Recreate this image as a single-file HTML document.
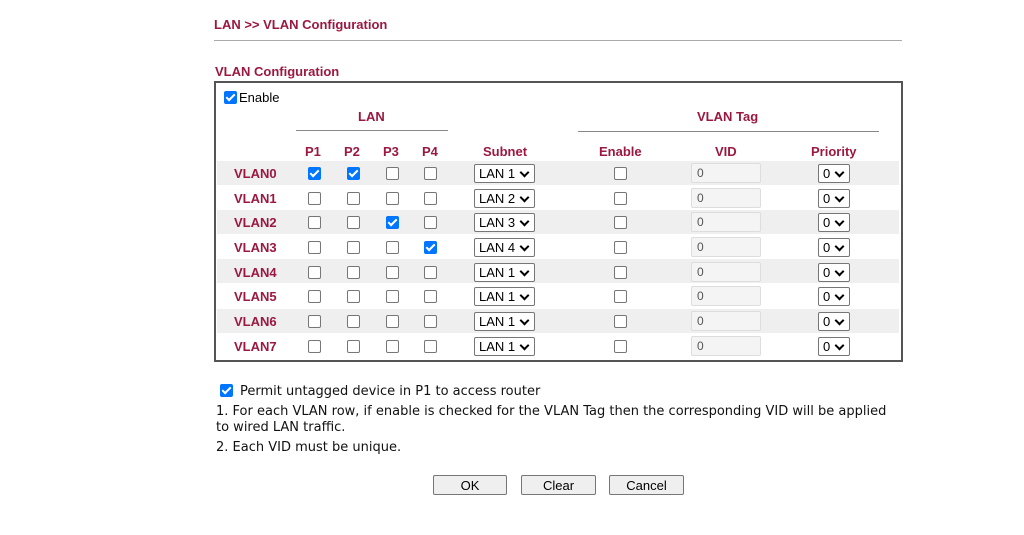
<!DOCTYPE html><html><head><meta charset="utf-8"><style>
body{margin:0;width:1024px;height:535px;background:#fff;position:relative;overflow:hidden;font-family:"Liberation Sans",Arial,sans-serif}
.a{position:absolute}
.t{color:#9b1840;font-weight:bold;font-size:13px}
.cb{position:absolute;width:11px;height:11px;border:1px solid #767676;border-radius:2px;background:#fff}
.cb.c{background:#0075ff;border-color:#0075ff}
.cb.c:after{content:"";position:absolute;left:3px;top:0px;width:3px;height:7px;border:solid #fff;border-width:0 2px 2px 0;transform:rotate(45deg)}
.sel{position:absolute;border:1px solid #767676;border-radius:2px;background:#fff;font-size:13px;line-height:17px;padding-left:4px;box-sizing:border-box;height:19px;color:#000}
.sel:after{content:"";position:absolute;right:6px;top:4px;width:5px;height:5px;border:solid #000;border-width:0 2px 2px 0;transform:rotate(45deg)}
.vid{position:absolute;width:70px;height:20px;border:1px solid #ddd;background:#f4f4f4;box-sizing:border-box;font-size:12px;color:#555;padding-left:5px;line-height:18px;border-radius:2px}
.row{position:absolute;left:217px;width:682px;height:24px}
.vl{position:absolute;left:234px;font-size:13px;font-weight:bold;color:#9b1840}
.btn{position:absolute;top:475px;height:20px;border:1px solid #767676;background:#efefef;border-radius:2px;font-size:13px;text-align:center;line-height:19px;box-sizing:border-box}
.n{font-family:"DejaVu Sans",Verdana,sans-serif;font-size:13px;color:#111}
</style></head><body>
<div class="a t" style="left:214px;top:17px">LAN &gt;&gt; VLAN Configuration</div>
<div class="a" style="left:214px;top:40px;width:688px;height:1px;background:#aaa"></div>
<div class="a t" style="left:215px;top:64px">VLAN Configuration</div>
<div class="a" style="left:214px;top:81px;width:685px;height:277px;border:2px solid #555"></div>
<div class="cb c" style="left:224px;top:91px"></div>
<div class="a" style="left:239px;top:90px;font-size:13px">Enable</div>
<div class="a t" style="left:358px;top:109px">LAN</div>
<div class="a" style="left:296px;top:130px;width:152px;height:1px;background:#888"></div>
<div class="a t" style="left:697px;top:109px">VLAN Tag</div>
<div class="a" style="left:578px;top:131px;width:301px;height:1px;background:#888"></div>
<div class="a t" style="left:305px;top:144px">P1</div>
<div class="a t" style="left:344px;top:144px">P2</div>
<div class="a t" style="left:383px;top:144px">P3</div>
<div class="a t" style="left:422px;top:144px">P4</div>
<div class="a t" style="left:483px;top:144px">Subnet</div>
<div class="a t" style="left:599px;top:144px">Enable</div>
<div class="a t" style="left:715px;top:144px">VID</div>
<div class="a t" style="left:811px;top:144px">Priority</div>

<div class="row" style="top:161px;background:#efefef"></div>
<div class="row" style="top:210px;background:#efefef"></div>
<div class="row" style="top:259px;background:#efefef"></div>
<div class="row" style="top:309px;background:#efefef"></div>

<div class="vl" style="top:166px">VLAN0</div><div class="cb c" style="left:308px;top:167px"></div><div class="cb c" style="left:347px;top:167px"></div><div class="cb" style="left:386px;top:167px"></div><div class="cb" style="left:424px;top:167px"></div><div class="sel" style="left:474px;top:164px;width:61px">LAN 1</div><div class="cb" style="left:614px;top:167px"></div><div class="vid" style="left:691px;top:163px">0</div><div class="sel" style="left:818px;top:164px;width:32px">0</div>
<div class="vl" style="top:191px">VLAN1</div><div class="cb" style="left:308px;top:192px"></div><div class="cb" style="left:347px;top:192px"></div><div class="cb" style="left:386px;top:192px"></div><div class="cb" style="left:424px;top:192px"></div><div class="sel" style="left:474px;top:189px;width:61px">LAN 2</div><div class="cb" style="left:614px;top:192px"></div><div class="vid" style="left:691px;top:188px">0</div><div class="sel" style="left:818px;top:189px;width:32px">0</div>
<div class="vl" style="top:215px">VLAN2</div><div class="cb" style="left:308px;top:216px"></div><div class="cb" style="left:347px;top:216px"></div><div class="cb c" style="left:386px;top:216px"></div><div class="cb" style="left:424px;top:216px"></div><div class="sel" style="left:474px;top:213px;width:61px">LAN 3</div><div class="cb" style="left:614px;top:216px"></div><div class="vid" style="left:691px;top:212px">0</div><div class="sel" style="left:818px;top:213px;width:32px">0</div>
<div class="vl" style="top:240px">VLAN3</div><div class="cb" style="left:308px;top:241px"></div><div class="cb" style="left:347px;top:241px"></div><div class="cb" style="left:386px;top:241px"></div><div class="cb c" style="left:424px;top:241px"></div><div class="sel" style="left:474px;top:238px;width:61px">LAN 4</div><div class="cb" style="left:614px;top:241px"></div><div class="vid" style="left:691px;top:237px">0</div><div class="sel" style="left:818px;top:238px;width:32px">0</div>
<div class="vl" style="top:265px">VLAN4</div><div class="cb" style="left:308px;top:266px"></div><div class="cb" style="left:347px;top:266px"></div><div class="cb" style="left:386px;top:266px"></div><div class="cb" style="left:424px;top:266px"></div><div class="sel" style="left:474px;top:263px;width:61px">LAN 1</div><div class="cb" style="left:614px;top:266px"></div><div class="vid" style="left:691px;top:262px">0</div><div class="sel" style="left:818px;top:263px;width:32px">0</div>
<div class="vl" style="top:289px">VLAN5</div><div class="cb" style="left:308px;top:290px"></div><div class="cb" style="left:347px;top:290px"></div><div class="cb" style="left:386px;top:290px"></div><div class="cb" style="left:424px;top:290px"></div><div class="sel" style="left:474px;top:287px;width:61px">LAN 1</div><div class="cb" style="left:614px;top:290px"></div><div class="vid" style="left:691px;top:286px">0</div><div class="sel" style="left:818px;top:287px;width:32px">0</div>
<div class="vl" style="top:314px">VLAN6</div><div class="cb" style="left:308px;top:315px"></div><div class="cb" style="left:347px;top:315px"></div><div class="cb" style="left:386px;top:315px"></div><div class="cb" style="left:424px;top:315px"></div><div class="sel" style="left:474px;top:312px;width:61px">LAN 1</div><div class="cb" style="left:614px;top:315px"></div><div class="vid" style="left:691px;top:311px">0</div><div class="sel" style="left:818px;top:312px;width:32px">0</div>
<div class="vl" style="top:339px">VLAN7</div><div class="cb" style="left:308px;top:340px"></div><div class="cb" style="left:347px;top:340px"></div><div class="cb" style="left:386px;top:340px"></div><div class="cb" style="left:424px;top:340px"></div><div class="sel" style="left:474px;top:337px;width:61px">LAN 1</div><div class="cb" style="left:614px;top:340px"></div><div class="vid" style="left:691px;top:336px">0</div><div class="sel" style="left:818px;top:337px;width:32px">0</div>

<div class="cb c" style="left:220px;top:384px"></div>
<div class="a n" style="left:240px;top:384px">Permit untagged device in P1 to access router</div>
<div class="a n" style="left:216px;top:404px;width:686px;line-height:16px">1. For each VLAN row, if enable is checked for the VLAN Tag then the corresponding VID will be applied to wired LAN traffic.</div>
<div class="a n" style="left:216px;top:440px">2. Each VID must be unique.</div>
<div class="btn" style="left:433px;width:74px">OK</div>
<div class="btn" style="left:521px;width:75px">Clear</div>
<div class="btn" style="left:609px;width:75px">Cancel</div>
</body></html>
